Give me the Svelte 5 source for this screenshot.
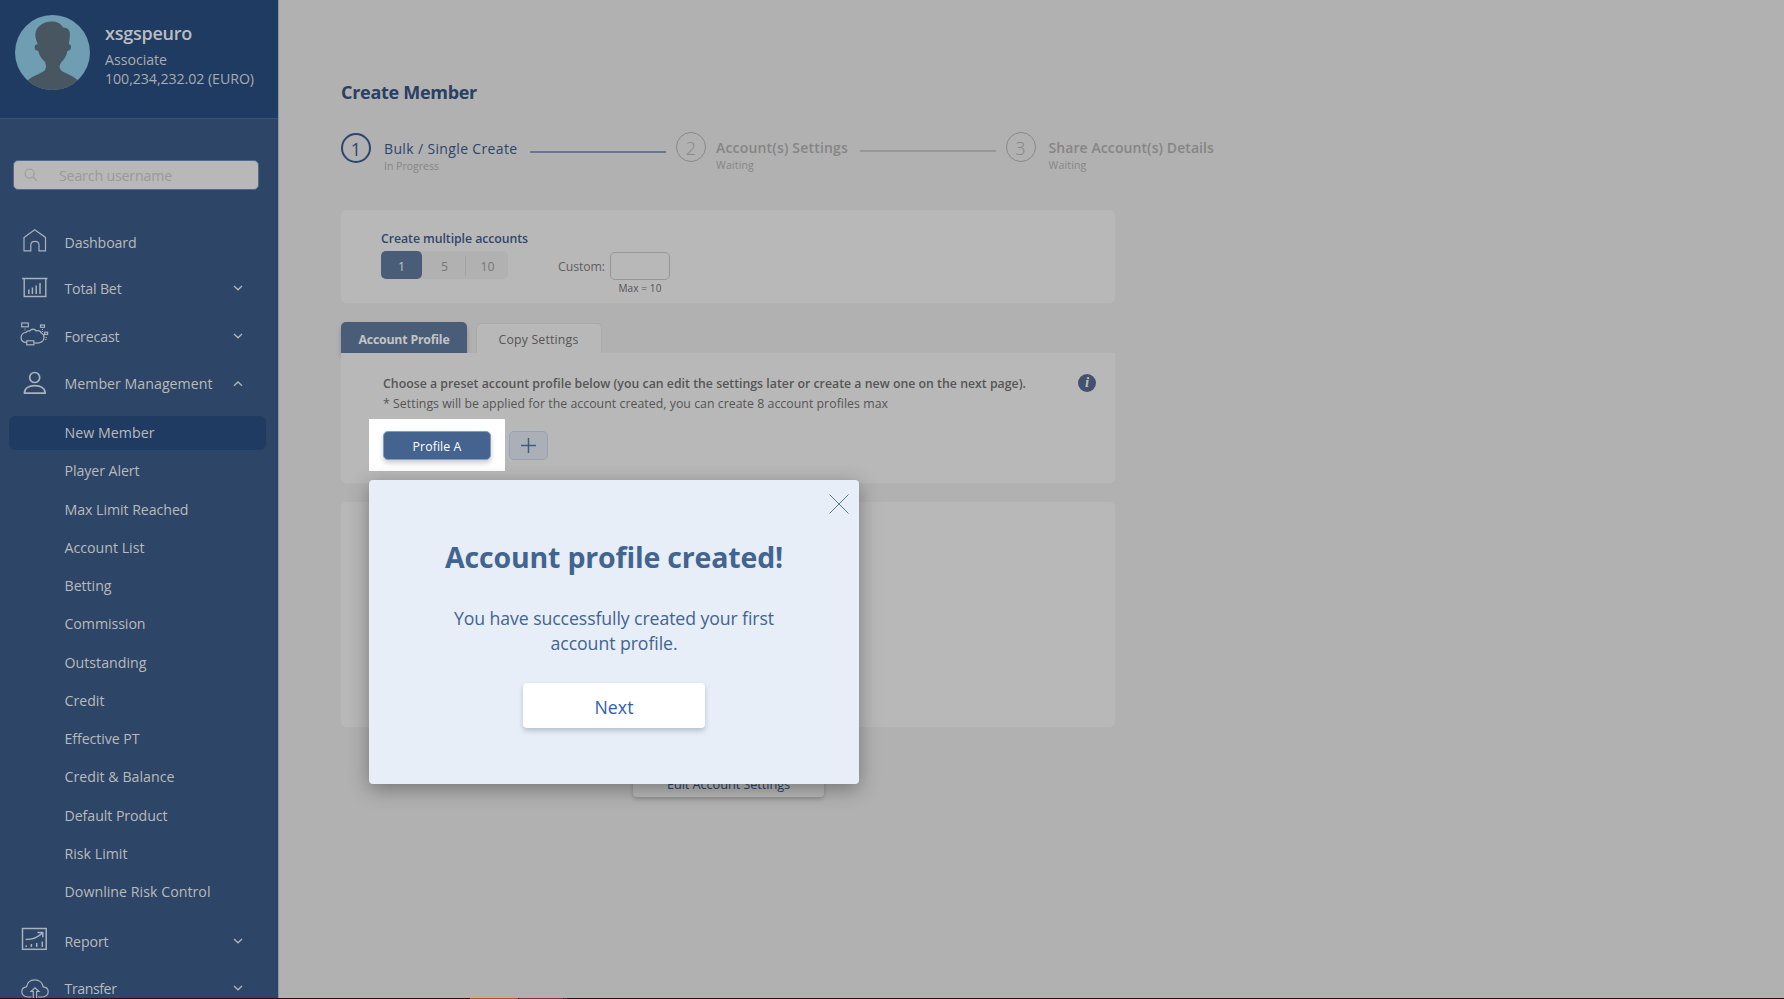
<script>
  // Spreads the letters so that a label takes the given width in pixels.
  function fit(node, width) {
    const natural = node.getBoundingClientRect().width;
    const count = node.textContent.length;
    if (width && natural) node.style.letterSpacing = `${(width - natural) / count}px`;
  }

  const top = [
    { name: 'Dashboard', w: 72, h: 45, icon: 'home' },
    { name: 'Total Bet', w: 57, h: 46.5, icon: 'chart', arrow: 'down' },
    { name: 'Forecast', w: 55, h: 49, icon: 'cloud', arrow: 'down' },
    { name: 'Member Management', w: 148, h: 46, icon: 'person', arrow: 'up' }
  ];
  const sub = [
    ['New Member', 90], ['Player Alert', 75], ['Max Limit Reached', 124], ['Account List', 80],
    ['Betting', 47], ['Commission', 81], ['Outstanding', 82], ['Credit', 40], ['Effective PT', 75],
    ['Credit & Balance', 110], ['Default Product', 103], ['Risk Limit', 63], ['Downline Risk Control', 146]
  ];
  const bottom = [
    { name: 'Report', w: 44, h: 47, icon: 'report', arrow: 'down' },
    { name: 'Transfer', w: 52, h: 47, icon: 'upload', arrow: 'down' }
  ];
</script>

{#snippet navRow(item)}
  <div class="nav-row" style="height:{item.h}px">
    <svg class="icon" viewBox="0 0 30 30" width="30" height="30">
      {#if item.icon === 'home'}
        <path d="M4 9.4 14.7 1.8 25.5 9.4V22.9H19V17.1C19 14.6 17.5 13.4 14.9 13.4S10.8 14.6 10.8 17.1V22.9H4Z" />
      {:else if item.icon === 'chart'}
        <path d="M2 5.5H27.5M4.2 5.5V23.5H25.8V5.5" stroke-width="1.4" />
        <path d="M8.8 16.5V21M12.4 14.5V21M16.2 12.5V21M20 10V21" stroke-width="1.5" />
      {:else if item.icon === 'cloud'}
        <rect x="1.7" y="2" width="6.6" height="3.8" />
        <rect x="20.5" y="4" width="4" height="2.3" />
        <rect x="24.6" y="11.2" width="3" height="2.3" />
        <path d="M5 7.5V10M22.5 8V11.5" stroke-dasharray="1 1" stroke-width="1" />
        <path d="M25.5 16.5H27M25 18.5H26.5" stroke-width=".8" />
        <path d="M6.5 21.5C3 21.5 1.1 19.4 1.1 16.6S3.2 11.4 6.3 11.3C7.2 9.4 9 9.8 9.8 10 11.2 7.6 14.8 7.7 16.2 9.9 19.5 9.2 20.8 10.6 21.2 12 23.1 12.6 24 14.2 24 16.4 24 20 21.5 22.4 14.3 22.2" stroke-width="1.3" />
        <rect x="6.7" y="19.8" width="7.2" height="4" />
      {:else if item.icon === 'person'}
        <circle cx="14.7" cy="8.5" r="5" stroke-width="1.7" />
        <path d="M4.4 24.2C4.4 19.5 8.5 16.6 14.8 16.6S25.2 19.5 25.2 24.2Z" stroke-width="1.7" stroke-linejoin="round" />
      {:else if item.icon === 'report'}
        <rect x="2.5" y="2.5" width="23.7" height="20.8" stroke-width="1.5" />
        <path d="M5.7 13.6C13 13.5 18 11.5 22.3 7M17.5 6.5H22.8V11.2" stroke-width="1.5" />
        <path d="M6.2 19.5V21M11.4 18V21M16.7 17V21M22.3 15.5V21" stroke-width="1.5" />
      {:else}
        <path d="M11.5 24H7.5C4.2 24 1.8 21.6 1.8 18.7 1.8 15.9 3.9 14 6.5 13.8 7.2 9.5 10.5 6.8 14.8 6.8S22.5 9.5 23.1 13.8C26 14 28.2 15.9 28.2 18.7 28.2 21.6 25.8 24 22.5 24H18M13.3 26V18.5H11L15 14.8 19 18.5H16.6V26" />
      {/if}
    </svg>
    <span class="nav-name"><span use:fit={item.w}>{item.name}</span></span>
    {#if item.arrow}
      <svg class="arrow" viewBox="0 0 10 6" width="10" height="6">
        <path d={item.arrow === 'down' ? 'M1 1 5 4.8 9 1' : 'M1 4.8 5 1 9 4.8'} />
      </svg>
    {/if}
  </div>
{/snippet}

<div class="app">
  <aside>
    <header class="user">
      <svg width="75" height="75" viewBox="0 0 75 75">
        <defs><clipPath id="disc"><circle cx="37.5" cy="37.5" r="37.5" /></clipPath></defs>
        <g clip-path="url(#disc)">
          <rect width="75" height="75" fill="#6f9db1" />
          <path fill="#475661" d="M23 29.5C20 28.5 18.5 33 20.5 35 21.3 35.8 22.3 35.6 23.2 35.8 24.2 41 27 44.2 30 46.8 32 52 31 55 27.5 57 22 60 15 62 11.5 67V76H65V67C60.5 62.5 54 59.5 48.5 57 44 54.5 43.5 51 46.5 47 49.5 44.5 51.5 40.5 52.5 35.8 53.5 35.6 54.5 35.5 55.3 34.5 57 32 55.8 28.8 53.7 29.3 54.5 26 55 21 54.8 18 54.2 13.8 51.5 12.6 48.5 12.8 45.5 8.4 41.8 6.5 37 6.5 27 6.5 20.8 12.5 20.3 19.5 20.2 23 21.7 26.5 23 29.5Z" />
        </g>
      </svg>
      <div class="user-text">
        <div class="user-name"><span use:fit={87}>xsgspeuro</span></div>
        <div class="user-line"><span use:fit={62}>Associate</span></div>
        <div class="user-line"><span use:fit={149}>100,234,232.02 (EURO)</span></div>
      </div>
    </header>
    <div class="search">
      <svg width="14" height="14" viewBox="0 0 15 15"><circle cx="6" cy="6" r="4.9" /><path d="M9.6 9.6 14 13.8" /></svg>
      <span use:fit={113}>Search username</span>
    </div>
    <nav>
      {#each top as item}{@render navRow(item)}{/each}
      <div class="sub">
        {#each sub as [name, w], i}
          <div class="sub-row"><div class="pill" class:active={i === 0}><span use:fit={w}>{name}</span></div></div>
        {/each}
      </div>
      {#each bottom as item}{@render navRow(item)}{/each}
    </nav>
  </aside>

  <main>
    <h1><span use:fit={136}>Create Member</span></h1>
    <div class="steps">
      <div class="step on">
        <div class="num">1</div>
        <div><div class="step-name"><span use:fit={133.5}>Bulk / Single Create</span></div><div class="state"><span use:fit={55}>In Progress</span></div></div>
      </div>
      <div class="line on"></div>
      <div class="step">
        <div class="num">2</div>
        <div><div class="step-name"><span use:fit={132}>Account(s) Settings</span></div><div class="state"><span use:fit={38}>Waiting</span></div></div>
      </div>
      <div class="line"></div>
      <div class="step last">
        <div class="num">3</div>
        <div><div class="step-name"><span use:fit={165.5}>Share Account(s) Details</span></div><div class="state"><span use:fit={38}>Waiting</span></div></div>
      </div>
    </div>

    <section class="card amounts">
      <div class="pick">
        <div class="pick-title"><span use:fit={147}>Create multiple accounts</span></div>
        <div class="segments"><div class="seg sel">1</div><div class="seg five">5</div><div class="seg ten">10</div></div>
      </div>
      <div class="custom"><span use:fit={47}>Custom:</span></div>
      <div class="amount">
        <div class="box"></div>
        <div class="max"><span use:fit={43}>Max = 10</span></div>
      </div>
    </section>

    <div class="tabs">
      <div class="tab cur"><span use:fit={91}>Account Profile</span></div>
      <div class="tab"><span use:fit={80}>Copy Settings</span></div>
    </div>
    <section class="card profiles">
      <div class="intro">
        <div>
          <div class="lead"><span use:fit={643}>Choose a preset account profile below (you can edit the settings later or create a new one on the next page).</span></div>
          <div class="note"><span use:fit={505}>* Settings will be applied for the account created, you can create 8 account profiles max</span></div>
        </div>
        <div class="info">i</div>
      </div>
      <div class="profile-row">
        <div class="spot"><button class="profile"><span use:fit={49}>Profile A</span></button></div>
        <button class="plus" aria-label="Add"><svg width="15" height="15" viewBox="0 0 15 15"><path d="M7.5 0V15M0 7.5H15" /></svg></button>
      </div>
      <div class="modal">
        <svg class="close" width="20" height="20" viewBox="0 0 20 20"><path d="M.5.5 19.5 19.5M19.5.5.5 19.5" /></svg>
        <h2><span use:fit={338}>Account profile created!</span></h2>
        <p><span use:fit={320}>You have successfully created your first</span><br /><span use:fit={127}>account profile.</span></p>
        <button class="next"><span use:fit={39}>Next</span></button>
      </div>
    </section>
    <section class="card blank"></section>
    <button class="edit"><span use:fit={123}>Edit Account Settings</span></button>
  </main>
  <div class="strip"><i class="orange"></i><i class="rose"></i><i class="plum"></i></div>
</div>

<style>
  :global(body) { margin: 0; overflow: hidden; }
  .app { position: relative; display: flex; width: 1784px; height: 999px; overflow: hidden; background: #b1b1b1; font-family: "Open Sans", "Noto Sans", sans-serif; font-size: 14.2px; white-space: nowrap; }
  .app * { box-sizing: border-box; }
  span { display: inline-block; }
  button { font: inherit; border: 0; padding: 0; display: flex; align-items: center; justify-content: center; }
  h1, h2, p { margin: 0; }

  aside { width: 279px; flex: none; background: #2d4566; border-right: 1px solid #8c92a1; color: #b9babc; }
  .user { height: 119px; display: flex; gap: 15px; padding: 15px 0 0 15px; background: #1f3b61; border-bottom: 1px solid #414f70; }
  .user svg { display: block; flex: none; }
  .user-text { padding-top: 5px; }
  .user-name { font-size: 18px; font-weight: 600; line-height: 26px; color: #bdbdbd; }
  .user-line { line-height: 19px; color: #a9abae; }
  .user-name + .user-line { margin-top: 4px; }
  .search { display: flex; align-items: center; width: 246px; height: 30px; margin: 41px 0 0 13px; padding-left: 10px; gap: 21px; border: 1px solid #53688a; border-radius: 5px; background: #b8b8b8; color: #999; }
  .search svg { fill: none; stroke: #999; stroke-width: 1.1; flex: none; }
  nav { padding-top: 30px; }
  .nav-row { display: flex; align-items: center; padding-left: 20px; }
  .icon { flex: none; fill: none; stroke: #a9b1bd; stroke-width: 1.2; }
  .nav-name { width: 168px; margin-left: 14.5px; }
  .arrow { fill: none; stroke: #b0b6c0; stroke-width: 1.3; }
  .sub { padding: 7.4px 0 6.85px 9px; }
  .sub-row { height: 38.25px; display: flex; align-items: center; }
  .pill { width: 257px; height: 34px; line-height: 33px; padding-left: 55.5px; border-radius: 6px; }
  .pill.active { background: #1f3b61; }

  main { width: 836px; padding: 79px 0 0 62px; flex: none; }
  h1 { font-size: 18px; font-weight: 700; line-height: 26px; color: #293f63; }
  .steps { display: flex; align-items: flex-start; height: 54px; margin-top: 27px; width: 900px; }
  .step { display: flex; align-items: flex-start; gap: 10px; color: #858585; }
  .step.on { gap: 13px; color: #2c456c; }
  .step.last { gap: 13px; margin-left: -2.5px; }
  .num { width: 30px; height: 30px; border: 1px solid #898989; border-radius: 50%; text-align: center; font-size: 18px; font-weight: 300; line-height: 30px; }
  .step.on .num { border: 2px solid #2c456c; line-height: 28px; font-weight: 400; margin-top: 1px; }
  .step-name { font-size: 14px; font-weight: 600; line-height: 20px; margin-top: 6px; }
  .step.on .step-name { margin-top: 7px; font-weight: 500; }
  .state { font-size: 10.5px; line-height: 14px; color: #868686; }
  .line { width: 136px; height: 2px; margin: 18px 12px 0 12px; background: #989898; }
  .line.on { background: #667898; margin: 19px 10.5px 0 12px; }

  .card { width: 774px; background: #b8b8b8; border-radius: 5px; }
  .amounts { display: flex; height: 93px; padding-left: 40px; margin-top: 24px; }
  .pick { width: 177px; padding-top: 19px; }
  .pick-title { font-size: 12.3px; font-weight: 600; line-height: 20px; color: #2e476e; }
  .segments { display: flex; width: 127px; height: 28px; margin-top: 2px; border-radius: 5px; background: #b1b1b1; font-size: 12.3px; color: #777; }
  .seg { flex: none; text-align: center; line-height: 31px; }
  .sel { width: 41px; border-radius: 5px; background: #495d78; color: #c4c4c4; }
  .five { width: 44px; height: 20px; margin-top: 5px; padding-left: 2px; line-height: 21px; border-right: 1px solid #a4a4a4; }
  .ten { width: 42px; padding-left: 1px; }
  .custom { width: 52px; padding-top: 47px; line-height: 20px; font-size: 12.3px; color: #606060; }
  .box { width: 60px; height: 28px; margin-top: 42px; border: 1px solid #979797; border-radius: 5px; }
  .max { text-align: center; font-size: 10px; line-height: 16px; color: #555; }

  .tabs { display: flex; align-items: flex-end; gap: 8.5px; height: 50px; }
  .tab { width: 126px; height: 30px; line-height: 31px; border: 1px solid #aaa; border-bottom: 0; border-radius: 5px 5px 0 0; text-align: center; background: #b8b8b8; color: #555; font-size: 12.3px; }
  .tab.cur { height: 31px; line-height: 36px; background: #495d78; border: 0; color: #c4c4c4; font-weight: 700; box-shadow: 0 3px 5px rgba(0, 0, 0, .2); position: relative; }
  .profiles { position: relative; height: 130px; border-top-left-radius: 0; border-top-right-radius: 0; }
  .intro { display: flex; justify-content: space-between; height: 61px; padding: 21px 19px 0 42px; font-size: 12.3px; line-height: 20px; color: #555; }
  .lead { font-weight: 600; }
  .info { width: 18px; height: 18px; border-radius: 50%; background: #42526e; color: #bcbcbc; font: italic 700 15px/17px "Liberation Serif", serif; text-align: center; }
  .profile-row { display: flex; align-items: center; margin: 5px 0 0 28px; gap: 4px; }
  .spot { width: 136px; height: 52px; background: #fff; display: flex; align-items: center; justify-content: center; padding-top: 1px; }
  .profile { width: 108px; height: 29px; border: 1px solid #7f9bc0; border-radius: 5px; background: #44648f; color: #fff; font-size: 12.3px; padding-top: 2px; font-weight: 500; box-shadow: 0 3px 5px rgba(0, 0, 0, .2); }
  .plus { width: 39px; height: 29px; border: 1px solid #96a3b5; border-radius: 5px; background: #aaafb8; }
  .plus path { stroke: #445c7c; stroke-width: 1.5; }
  .blank { height: 225px; margin-top: 18.5px; }
  .edit { width: 191px; height: 32px; margin: 38px 0 0 292px; border-radius: 4px; background: #b8b8b8; font-size: 12.8px; color: #2c456c; padding-top: 6px; box-shadow: 0 2px 4px rgba(0, 0, 0, .2); }

  .modal { position: absolute; z-index: 2; left: 28px; top: 127px; width: 490px; height: 304px; border-radius: 4px; background: #e7eef8; color: #426490; text-align: center; box-shadow: 0 5px 20px rgba(0, 0, 0, .34); }
  .close { position: absolute; right: 10.5px; top: 13.5px; fill: none; stroke: #5876a2; stroke-width: 1; }
  h2 { font-size: 28.5px; font-weight: 700; line-height: 40px; padding-top: 57px; }
  p { font-size: 17.7px; line-height: 25px; margin-top: 29px; }
  p span { line-height: 25px; vertical-align: top; }
  .next { width: 182px; height: 45px; margin: 27px auto 0; border-radius: 4px; background: #fff; color: #2e5fae; font-size: 17.7px; padding-top: 3px; box-shadow: 0 3px 5px rgba(40, 60, 90, .25); }

  .strip { position: absolute; z-index: 3; left: 0; bottom: 0; width: 100%; height: 1px; padding-left: 470px; display: flex; gap: 1px; background: #350713; }
  .orange { width: 48px; background: #c64a18; }
  .rose { width: 44px; background: #8b2c3d; }
  .plum { width: 3px; background: #6a2434; }
</style>
